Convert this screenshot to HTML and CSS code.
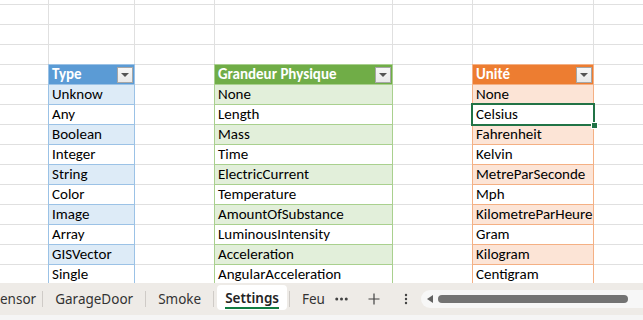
FILE: index.html
```html
<!DOCTYPE html>
<html lang="fr">
<head>
  <meta charset="UTF-8" />
  <title>Settings - Classeur</title>
  <link rel="stylesheet" href="styles.css">
</head>
<body>

<div class="sheet">
  <div class="grid">
    <div></div><div></div><div></div><div></div><div></div><div></div><div></div>
    <div></div><div></div><div></div><div></div><div></div><div></div><div></div>
    <div></div><div></div><div></div><div></div><div></div><div></div><div></div>
    <div></div><div></div><div></div><div></div><div></div><div></div><div></div>

    <div></div>
    <div class="head blue">Type<span class="filter"></span></div>
    <div></div>
    <div class="head green">Grandeur Physique<span class="filter"></span></div>
    <div></div>
    <div class="head orange">Unité<span class="filter"></span></div>
    <div></div>

    <div></div><div class="cell blue alt">Unknow</div><div></div><div class="cell green alt">None</div><div></div><div class="cell orange alt">None</div><div></div>
    <div></div><div class="cell blue">Any</div><div></div><div class="cell green">Length</div><div></div><div class="cell orange selected">Celsius</div><div></div>
    <div></div><div class="cell blue alt">Boolean</div><div></div><div class="cell green alt">Mass</div><div></div><div class="cell orange alt">Fahrenheit</div><div></div>
    <div></div><div class="cell blue">Integer</div><div></div><div class="cell green">Time</div><div></div><div class="cell orange">Kelvin</div><div></div>
    <div></div><div class="cell blue alt">String</div><div></div><div class="cell green alt">ElectricCurrent</div><div></div><div class="cell orange alt">MetreParSeconde</div><div></div>
    <div></div><div class="cell blue">Color</div><div></div><div class="cell green">Temperature</div><div></div><div class="cell orange">Mph</div><div></div>
    <div></div><div class="cell blue alt">Image</div><div></div><div class="cell green alt">AmountOfSubstance</div><div></div><div class="cell orange alt">KilometreParHeure</div><div></div>
    <div></div><div class="cell blue">Array</div><div></div><div class="cell green">LuminousIntensity</div><div></div><div class="cell orange">Gram</div><div></div>
    <div></div><div class="cell blue alt">GISVector</div><div></div><div class="cell green alt">Acceleration</div><div></div><div class="cell orange alt">Kilogram</div><div></div>
    <div></div><div class="cell blue">Single</div><div></div><div class="cell green">AngularAcceleration</div><div></div><div class="cell orange">Centigram</div><div></div>
  </div>
</div>

<div class="tabbar">
  <span class="tab first">ensor</span><i class="sep"></i>
  <span class="tab">GarageDoor</span><i class="sep"></i>
  <span class="tab">Smoke</span><i class="sep"></i>
  <span class="tab active"><span class="label">Settings</span></span><i class="sep"></i>
  <span class="tab">Feu</span>

  <span class="icon more">
    <svg width="13" height="4" viewBox="0 0 13 4"><circle cx="1.75" cy="2" r="1.5" fill="#424242"/><circle cx="6.5" cy="2" r="1.5" fill="#424242"/><circle cx="11.25" cy="2" r="1.5" fill="#424242"/></svg>
  </span>
  <span class="icon add">
    <svg width="12" height="12" viewBox="0 0 12 12"><path d="M6 0.5v11M0.5 6h11" stroke="#424242" stroke-width="1.2" fill="none"/></svg>
  </span>
  <span class="icon menu">
    <svg width="4" height="12" viewBox="0 0 4 12"><circle cx="2" cy="2" r="1.2" fill="#424242"/><circle cx="2" cy="6" r="1.2" fill="#424242"/><circle cx="2" cy="10" r="1.2" fill="#424242"/></svg>
  </span>

  <div class="hscroll">
    <svg class="arrow" width="6" height="8" viewBox="0 0 6 8"><path d="M6 0L0 4L6 8Z" fill="#616161"/></svg>
    <div class="thumb"></div>
  </div>
</div>
<div class="footer"></div>

</body>
</html>
```

FILE: styles.css
```css
body {
  margin: 0;
  width: 643px;
  height: 320px;
  overflow: hidden;
  background: #ffffff;
  font-family: Calibri, Carlito, Lato, sans-serif;
}

.sheet {
  height: 283px;
  overflow: hidden;
}

.grid {
  display: grid;
  grid-template-columns: 48px 85px 79px 177px 79px 120px 1fr;
  grid-template-rows: 4px;
  grid-auto-rows: 19px;
  gap: 1px;
  background: #e0e0e0;
}

.grid > div {
  background: #ffffff;
}

.cell, .head {
  padding-left: 3px;
  font-size: 15px;
  line-height: 19px;
  white-space: nowrap;
  overflow: hidden;
  color: #000000;
}

.head {
  display: flex;
  align-items: center;
  justify-content: space-between;
  padding-right: 0;
  font-weight: bold;
  color: #ffffff;
}

.selected {
  position: relative;
  outline: 2px solid #217346;
  overflow: visible !important;
}

.selected::after {
  content: "";
  position: absolute;
  right: -5px;
  bottom: -5px;
  width: 5px;
  height: 5px;
  background: #217346;
  border: 1px solid #ffffff;
}

/* table colours */
.grid > .blue { box-shadow: 0 0 0 1px #9bc2e6; }
.grid > .green { box-shadow: 0 0 0 1px #a9d08e; }
.grid > .orange { box-shadow: 0 0 0 1px #f4b084; }

.grid > .blue.alt { background: #ddebf7; }
.grid > .green.alt { background: #e2efda; }
.grid > .orange.alt { background: #fce4d6; }

.grid > .head.blue { background: #5b9bd5; }
.grid > .head.green { background: #70ad47; }
.grid > .head.orange { background: #ed7d31; }

.filter {
  width: 14px;
  height: 14px;
  margin-right: 1px;
  border: 1px solid #a6a6a6;
  background: linear-gradient(#f7f7f7, #e9e9e9);
  display: flex;
  align-items: center;
  justify-content: center;
  flex-shrink: 0;
}

.filter::before {
  content: "";
  border-left: 4px solid transparent;
  border-right: 4px solid transparent;
  border-top: 4px solid #555555;
  margin-top: 1px;
}

/* sheet tabs */
.tabbar {
  height: 32px;
  background: #eeebe7;
  display: flex;
  align-items: center;
  font-family: "Noto Sans", "Open Sans", sans-serif;
  font-size: 13.5px;
  color: #333333;
}

.tab {
  padding: 0 12px;
  white-space: nowrap;
}

.tab.first {
  padding-left: 0;
  padding-right: 6px;
}

.sep {
  width: 1px;
  height: 16px;
  background: #cfcbc7;
}

.tab.active {
  align-self: flex-start;
  margin: 2px 2px 0 3px;
  height: 25px;
  padding: 0 8px;
  background: #ffffff;
  border-radius: 4px;
  display: flex;
  align-items: center;
}

.tab.active .label {
  font-weight: 600;
  color: #242424;
  border-bottom: 2px solid #107c41;
  line-height: 18px;
  padding-top: 2px;
}

.icon {
  display: flex;
  align-items: center;
  justify-content: center;
}

.more { margin-left: -2px; }
.add { margin-left: 20px; }
.menu { margin-left: 24px; }

.hscroll {
  flex: 1;
  margin-left: 13px;
  margin-right: -20px;
  height: 18px;
  border-radius: 9px;
  background: #f7f7f7;
  display: flex;
  align-items: center;
  padding-left: 6px;
}

.arrow {
  flex-shrink: 0;
}

.thumb {
  margin-left: 5px;
  width: 190px;
  height: 8px;
  border-radius: 4px;
  background: #737373;
}

.footer {
  height: 5px;
  background: #f5f5f5;
}
```
